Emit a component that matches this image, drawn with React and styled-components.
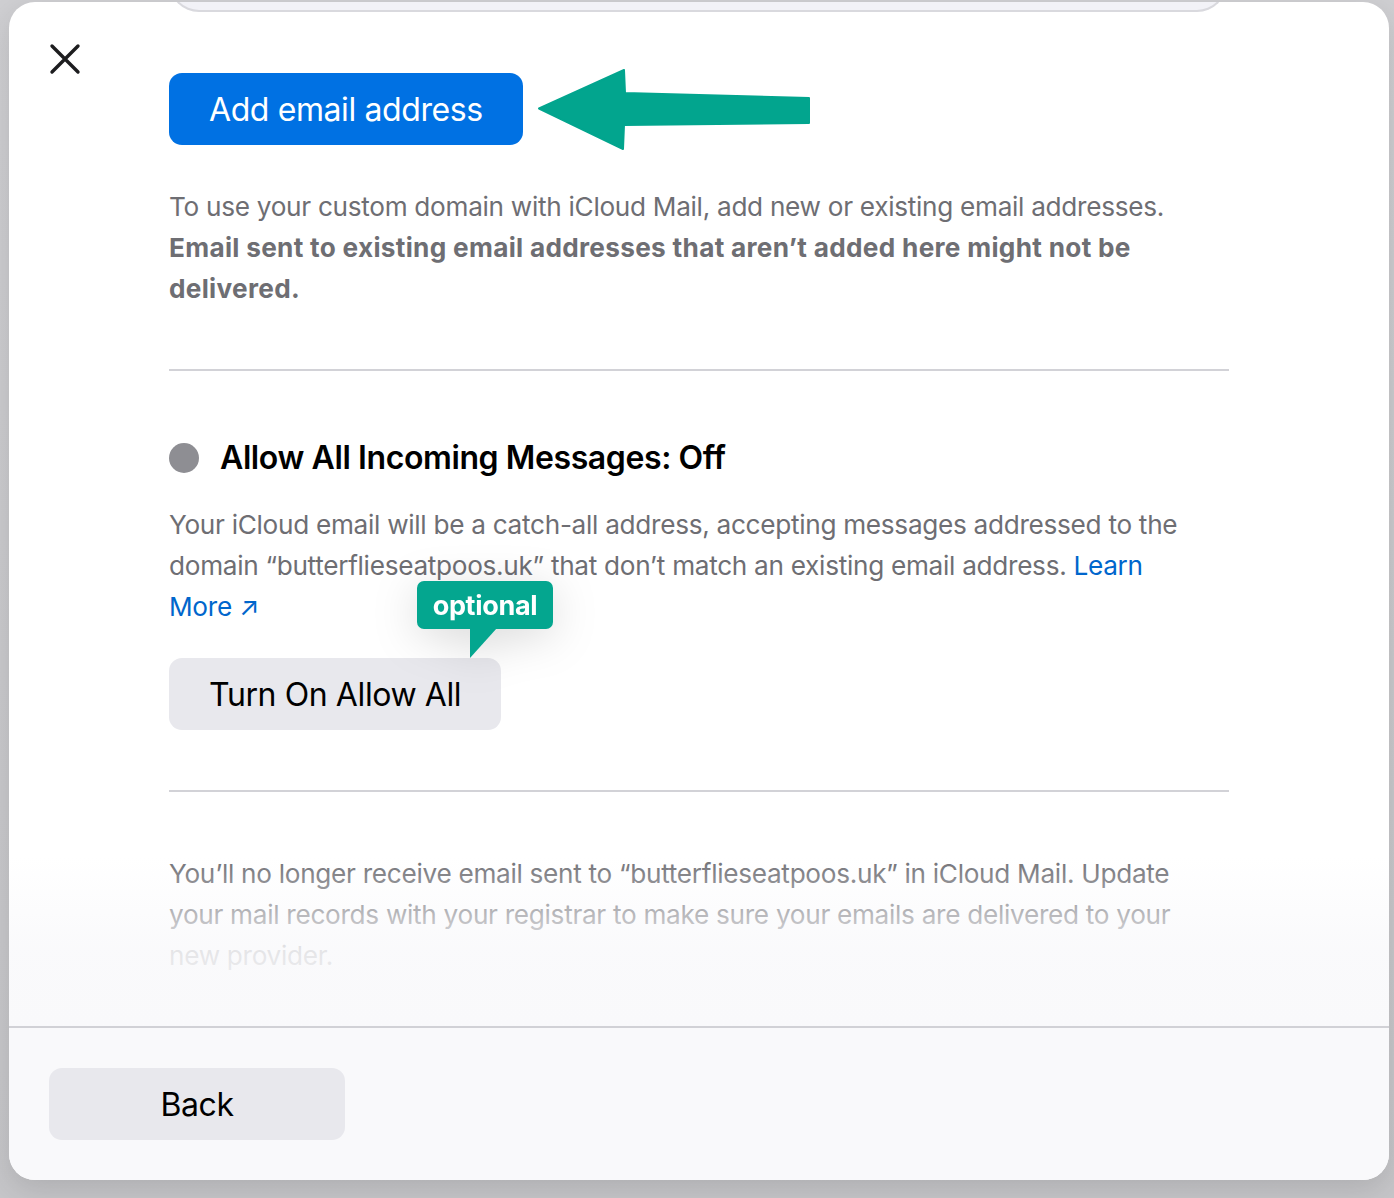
import React from "react";
import styled, { createGlobalStyle } from "styled-components";

const GlobalStyle = createGlobalStyle`
  html, body {
    margin: 0;
    padding: 0;
    background: #c9c9cc;
    font-family: Inter, "Noto Sans", "Liberation Sans", sans-serif;
  }
  * { box-sizing: border-box; }
`;

const Backdrop = styled.div`
  height: 1198px;
  padding: 2px 5px 18px 9px;
  background: linear-gradient(180deg, #cfcfd2 0%, #c6c6c9 100%);
`;

const Sheet = styled.div`
  height: 100%;
  background: #ffffff;
  border-radius: 26px;
  overflow: hidden;
  display: flex;
  flex-direction: column;
  box-shadow: 0 10px 30px rgba(0, 0, 0, 0.12);
`;

const Scroller = styled.div`
  flex: 1;
  position: relative;
  overflow: hidden;
  padding-left: 160px;
`;

const Column = styled.div`
  width: 1060px;
  position: relative;
`;

const CutOffCard = styled.div`
  height: 40px;
  margin-top: -30px;
  margin-right: 2px;
  background: #f2f2f7;
  border: 2px solid #d9d9de;
  border-top: none;
  border-radius: 0 0 30px 30px;
`;

const CloseButton = styled.button`
  position: absolute;
  top: 39px;
  left: 38px;
  width: 36px;
  height: 36px;
  padding: 0;
  border: none;
  background: none;
  display: flex;
  align-items: center;
  justify-content: center;
`;

const Button = styled.button`
  height: 72px;
  padding: 0 40px;
  border: none;
  border-radius: 13px;
  font-family: inherit;
  font-size: 32px;
  letter-spacing: -0.4px;
  background: ${(p) => (p.$primary ? "#0071e3" : "#e8e8ed")};
  color: ${(p) => (p.$primary ? "#ffffff" : "#000000")};
  width: ${(p) => (p.$width ? p.$width : "auto")};
`;

const ButtonRow = styled.div`
  position: relative;
  display: flex;
  margin-top: ${(p) => p.$top || 0}px;
`;

const Paragraph = styled.p`
  margin: ${(p) => p.$top || 0}px 0 0;
  font-size: 26.2px;
  line-height: 41px;
  color: #6e6e73;
  letter-spacing: -0.3px;
  padding-right: 20px;
  b {
    font-weight: 700;
    letter-spacing: 0.3px;
  }
`;

const Link = styled.a`
  color: #0066cc;
  text-decoration: none;
`;

const Divider = styled.hr`
  margin: ${(p) => p.$top}px 0 0;
  border: none;
  height: 2px;
  background: #d2d2d7;
`;

const StatusHeading = styled.h2`
  margin: 67px 0 0;
  display: flex;
  align-items: center;
  gap: 21px;
  font-size: 32px;
  line-height: 40px;
  font-weight: 600;
  letter-spacing: -0.4px;
  color: #000000;
`;

const StatusDot = styled.span`
  width: 30px;
  height: 30px;
  border-radius: 50%;
  background: #8e8e93;
  flex: none;
`;

const PointerArrow = styled.svg`
  position: absolute;
  left: 369px;
  top: -4px;
`;

const Callout = styled.div`
  position: absolute;
  left: 248px;
  top: -77px;
  filter: drop-shadow(0 8px 22px rgba(0, 0, 0, 0.14));
`;

const CalloutBox = styled.div`
  width: 136px;
  height: 48px;
  border-radius: 7px;
  background: #04a68f;
  color: #ffffff;
  font-weight: 700;
  font-size: 27px;
  letter-spacing: -0.3px;
  display: flex;
  align-items: center;
  justify-content: center;
`;

const CalloutTail = styled.div`
  width: 27px;
  height: 30px;
  margin-left: 53px;
  margin-top: -1px;
  background: #04a68f;
  clip-path: polygon(0 0, 100% 0, 0 100%);
`;

const Fade = styled.div`
  position: absolute;
  left: 0;
  right: 0;
  bottom: 0;
  height: 170px;
  background: linear-gradient(180deg, rgba(249, 249, 251, 0) 0%, rgba(249, 249, 251, 0.85) 55%, #f9f9fb 100%);
  pointer-events: none;
`;

const Footer = styled.div`
  flex: none;
  height: 154px;
  border-top: 2px solid #d1d1d6;
  background: #f9f9fb;
  padding: 40px 40px;
`;

function CloseIcon() {
  return (
    <svg width="32" height="32" viewBox="0 0 32 32">
      <path d="M3 3 L29 29 M29 3 L3 29" stroke="#1d1d1f" strokeWidth="3.4" strokeLinecap="round" />
    </svg>
  );
}

export default function App() {
  return (
    <Backdrop>
      <GlobalStyle />
      <Sheet>
        <Scroller>
          <CloseButton aria-label="Close">
            <CloseIcon />
          </CloseButton>
          <Column>
            <CutOffCard />

            <ButtonRow $top={61}>
              <Button $primary>Add email address</Button>
              <PointerArrow width="276" height="84" viewBox="0 0 276 84">
                <path
                  d="M1 39.5 L86 1 L87 24 L271 29 L271 54 L86 56 L85 80 Z"
                  fill="#02a58e"
                  stroke="#02a58e"
                  strokeWidth="2"
                  strokeLinejoin="round"
                />
              </PointerArrow>
            </ButtonRow>

            <Paragraph $top={41}>
              To use your custom domain with iCloud Mail, add new or existing email addresses.{" "}
              <b>Email sent to existing email addresses that aren’t added here might not be delivered.</b>
            </Paragraph>

            <Divider $top={60} />

            <StatusHeading>
              <StatusDot />
              Allow All Incoming Messages: Off
            </StatusHeading>

            <Paragraph $top={26}>
              Your iCloud email will be a catch-all address, accepting messages addressed to the domain
              “butterflieseatpoos.uk” that don’t match an existing email address.{" "}
              <Link href="#">Learn More ↗</Link>
            </Paragraph>

            <ButtonRow $top={31}>
              <Button>Turn On Allow All</Button>
              <Callout>
                <CalloutBox>optional</CalloutBox>
                <CalloutTail />
              </Callout>
            </ButtonRow>

            <Divider $top={60} />

            <Paragraph $top={61}>
              You’ll no longer receive email sent to “butterflieseatpoos.uk” in iCloud Mail. Update
              your mail records with your registrar to make sure your emails are delivered to your
              new provider.
            </Paragraph>
          </Column>
          <Fade />
        </Scroller>
        <Footer>
          <Button $width="296px">Back</Button>
        </Footer>
      </Sheet>
    </Backdrop>
  );
}
